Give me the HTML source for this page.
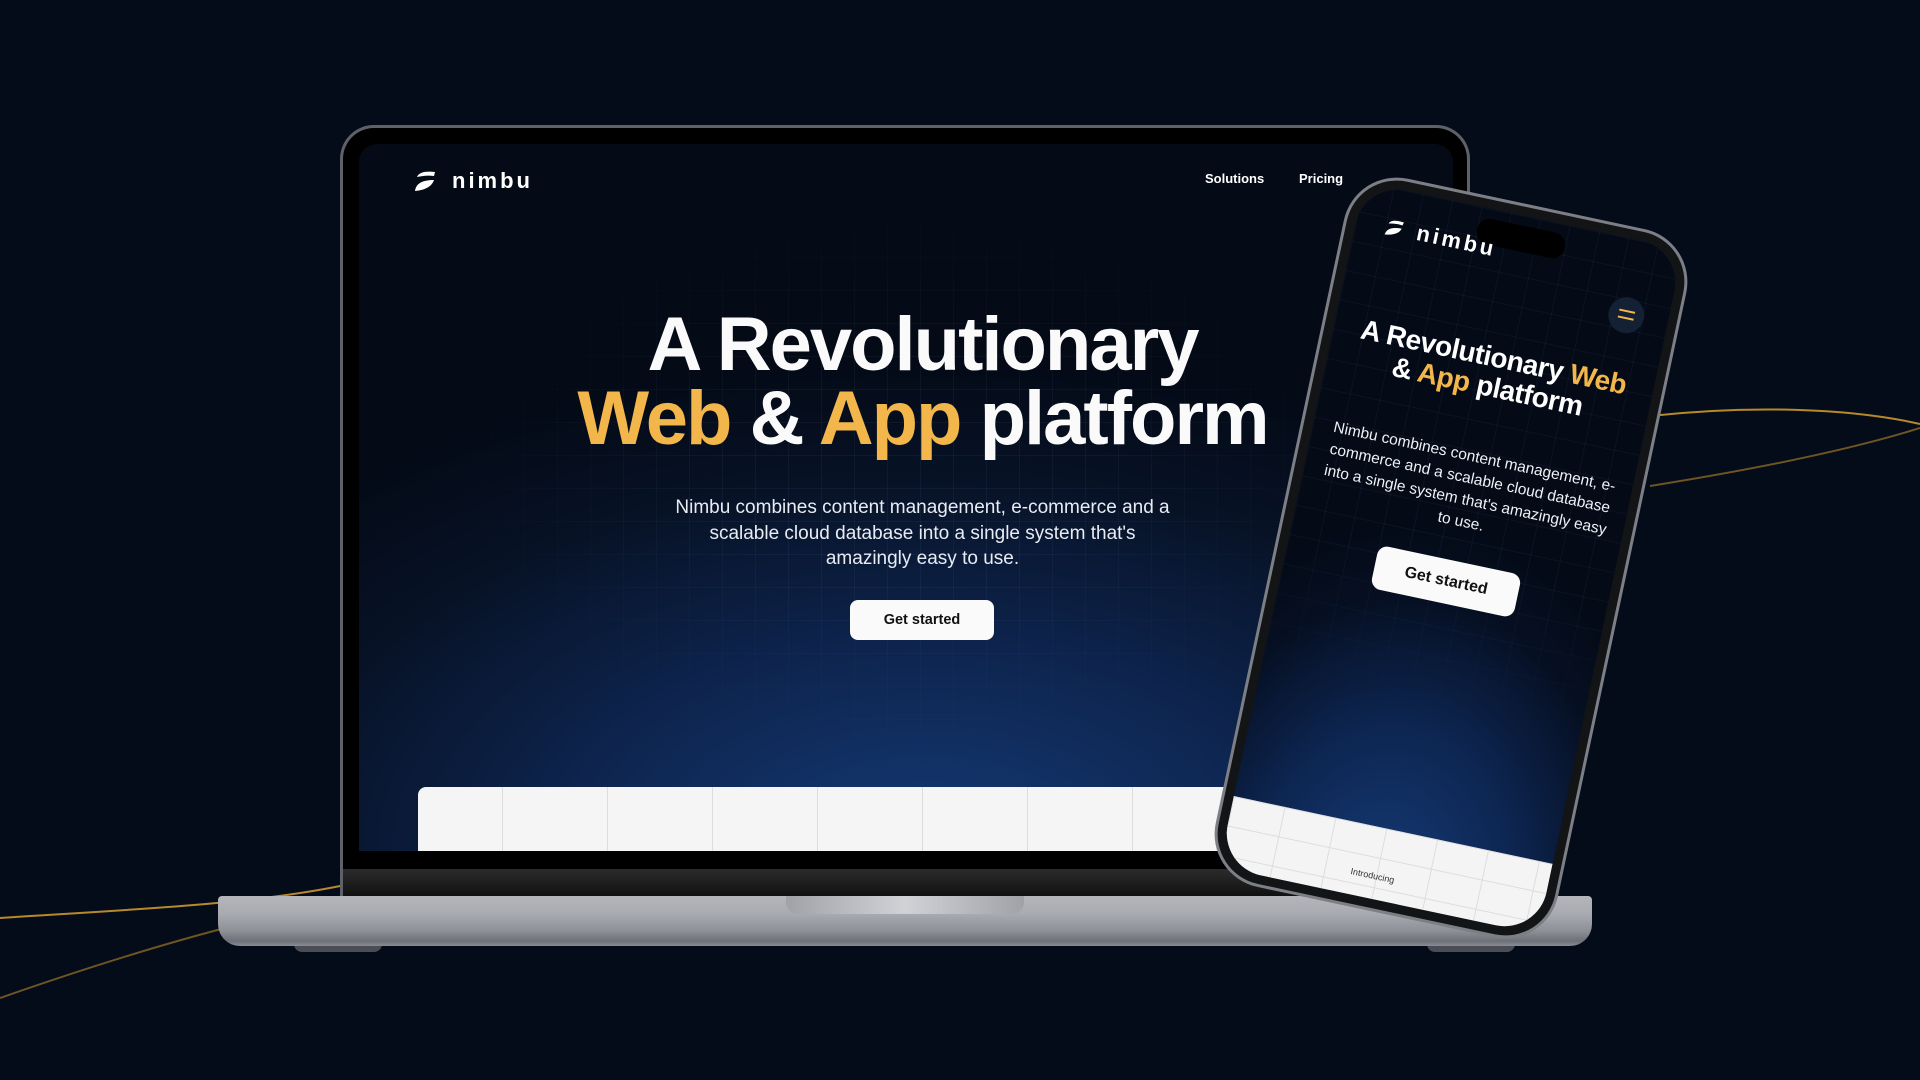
<!DOCTYPE html>
<html><head><meta charset="utf-8"><style>
*{margin:0;padding:0;box-sizing:border-box}
body{width:1920px;height:1080px;background:#040b19;position:relative;overflow:hidden;font-family:"Liberation Sans",sans-serif}
.abs{position:absolute}
.grid{background-image:linear-gradient(rgba(120,150,200,.07) 1px,transparent 1px),linear-gradient(90deg,rgba(120,150,200,.07) 1px,transparent 1px);background-size:33px 33px}
.logo{display:flex;align-items:center;color:#fff}
.logo .t{font-weight:700;letter-spacing:3px}
</style></head><body>
<svg class="abs" style="left:0;top:0" width="1920" height="1080">
<path d="M0 918 C120 910 250 905 345 885" stroke="#b8892a" stroke-width="2" fill="none"/>
<path d="M0 998 C80 970 160 945 225 928" stroke="#6e5522" stroke-width="2" fill="none"/>
<path d="M1650 416 C1750 405 1850 408 1920 424" stroke="#b8892a" stroke-width="2" fill="none"/>
<path d="M1650 486 C1750 470 1850 450 1920 428" stroke="#6e5522" stroke-width="2" fill="none"/>
</svg>
<div class="abs" style="left:294px;top:940px;width:88px;height:12px;background:#4a4d55;border-radius:0 0 8px 8px"></div>
<div class="abs" style="left:1427px;top:940px;width:88px;height:12px;background:#4a4d55;border-radius:0 0 8px 8px"></div>
<div class="abs" style="left:218px;top:896px;width:1374px;height:50px;border-radius:4px 4px 22px 22px;background:linear-gradient(180deg,#b4b6bc 0%,#a9abb1 35%,#8e9097 70%,#6d7077 90%,#8a8c92 100%)"></div>
<div class="abs" style="left:786px;top:896px;width:238px;height:18px;border-radius:0 0 12px 12px;background:linear-gradient(90deg,#a0a2a8,#d0d2d6 50%,#a0a2a8)"></div>
<div class="abs" style="left:340px;top:125px;width:1130px;height:771px;border-radius:34px 34px 0 0;background:#000;border:3px solid #5e6168;border-bottom:none"></div>
<div class="abs" style="left:343px;top:869px;width:1124px;height:27px;background:linear-gradient(#2b2b2d,#111)"></div>
<div class="abs" style="left:359px;top:144px;width:1094px;height:707px;border-radius:18px 18px 0 0;overflow:hidden;background:radial-gradient(ellipse 80% 70% at 52% 100%,#143a74 0%,#0e2550 40%,#071226 75%,#040a16 100%)">
  <div class="abs grid" style="left:0;top:80px;width:100%;height:620px;-webkit-mask-image:radial-gradient(ellipse 55% 60% at 50% 40%,#000 30%,transparent 80%)"></div>
  <div class="abs logo" style="left:55px;top:24px">
    <svg width="22" height="22" viewBox="0 0 22 22"><path d="M3 7 C5 2 12 1 21 2 L20 6 C13 5 8 6 3 7Z" fill="#fff"/><path d="M1 21 C2 13 9 10 20 10 C18 16 12 20 1 21Z" fill="#fff"/></svg>
    <span class="t" style="font-size:22px;margin-left:16px">nimbu</span>
  </div>
  <div class="abs" style="left:846px;top:27px;color:#fff;font-size:13px;font-weight:700">Solutions</div>
  <div class="abs" style="left:940px;top:27px;color:#fff;font-size:13px;font-weight:700">Pricing</div>
  <div class="abs" style="left:0;width:1127px;top:164px;text-align:center;color:#fafafa;font-weight:700;font-size:76px;line-height:74px;letter-spacing:-2px">A Revolutionary<br><span style="color:#f2b64a">Web</span> &amp; <span style="color:#f2b64a">App</span> platform</div>
  <div class="abs" style="left:0;width:1127px;top:351px;text-align:center;color:#e8ecf3;font-size:19px;line-height:25.5px">Nimbu combines content management, e-commerce and a<br>scalable cloud database into a single system that's<br>amazingly easy to use.</div>
  <div class="abs" style="left:491px;top:456px;width:144px;height:40px;background:#fafafa;border-radius:8px;text-align:center;line-height:40px;font-size:14.5px;font-weight:700;color:#111">Get started</div>
  <div class="abs" style="left:59px;top:643px;width:1000px;height:64px;background:#f5f5f5;border-radius:8px 8px 0 0;background-image:linear-gradient(90deg,#ddd 1px,transparent 1px);background-size:105px 100%;background-position:84px 0"></div>
</div>
<div class="abs" style="left:1276px;top:196px;width:350px;height:724px;transform:rotate(12deg);transform-origin:center">
  <div class="abs" style="left:0;top:0;width:350px;height:724px;border-radius:54px;background:#7c7f86;padding:3px">
    <div style="width:100%;height:100%;border-radius:51px;background:#121416;padding:9px">
      <div style="position:relative;width:100%;height:100%;border-radius:43px;overflow:hidden;background:radial-gradient(ellipse 90% 55% at 50% 100%,#163c78 0%,#0d2652 45%,#060f22 80%,#040a16 100%)">
        <div class="abs grid" style="left:0;top:0;width:100%;height:100%;background-size:30px 30px;-webkit-mask-image:linear-gradient(#000 50%,transparent 75%)"></div>
        <div class="abs" style="left:120px;top:10px;width:90px;height:26px;border-radius:14px;background:#000"></div>
        <div class="abs logo" style="left:28px;top:26px">
          <svg width="22" height="18" viewBox="0 0 22 22"><path d="M3 7 C5 2 12 1 21 2 L20 6 C13 5 8 6 3 7Z" fill="#fff"/><path d="M1 21 C2 13 9 10 20 10 C18 16 12 20 1 21Z" fill="#fff"/></svg>
          <span class="t" style="font-size:22px;margin-left:12px">nimbu</span>
        </div>
        <div class="abs" style="left:266px;top:58px;width:36px;height:36px;border-radius:50%;background:#142034">
          <div class="abs" style="left:10px;top:13px;width:16px;height:2px;background:#f2b64a"></div>
          <div class="abs" style="left:10px;top:20px;width:16px;height:2px;background:#f2b64a"></div>
        </div>
        <div class="abs" style="left:0;width:100%;top:130px;text-align:center;color:#fff;font-weight:700;font-size:28px;line-height:30px;letter-spacing:-.5px">A Revolutionary <span style="color:#f2b64a">Web</span><br>&amp; <span style="color:#f2b64a">App</span> platform</div>
        <div class="abs" style="left:18px;width:294px;top:236px;text-align:center;color:#eef1f6;font-size:15.5px;line-height:22px">Nimbu combines content management, e-commerce and a scalable cloud database into a single system that's amazingly easy to use.</div>
        <div class="abs" style="left:90px;top:352px;width:146px;height:44px;background:#fafafa;border-radius:10px;text-align:center;line-height:44px;font-size:16px;font-weight:700;color:#111">Get started</div>
        <div class="abs" style="left:0;top:628px;width:100%;height:120px;background:#f4f4f4;background-image:linear-gradient(90deg,#ddd 1px,transparent 1px),linear-gradient(#ddd 1px,transparent 1px);background-size:52px 100%,100% 30px"></div>
        <div class="abs" style="left:130px;top:672px;color:#333;font-size:9px">Introducing</div>
      </div>
    </div>
  </div>
</div>
</body></html>
